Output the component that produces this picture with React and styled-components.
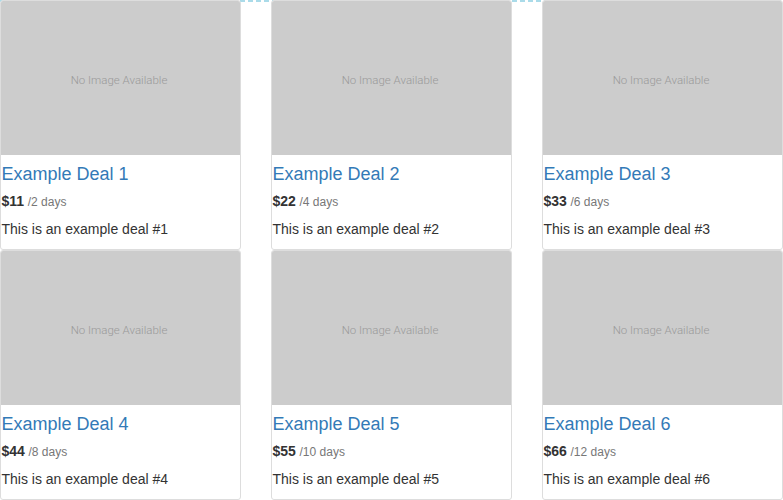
import React from "react";
import styled, { createGlobalStyle } from "styled-components";

const Global = createGlobalStyle`
  html, body { margin: 0; padding: 0; background: #fff; }
  body { font-family: "Liberation Sans", Arial, sans-serif; color: #333; }
`;

const Grid = styled.div`
  position: relative;
  display: grid;
  grid-template-columns: repeat(3, 241px);
  column-gap: 30px;
  width: 783px;
  &::before {
    content: "";
    position: absolute;
    left: 0;
    right: 0;
    top: 0;
    height: 2px;
    background: repeating-linear-gradient(90deg, #aadbe9 0 5px, transparent 5px 8px);
    z-index: 0;
  }
`;

const Card = styled.div`
  position: relative;
  z-index: 1;
  display: flex;
  flex-direction: column;
  height: 250px;
  box-sizing: border-box;
  border: 1px solid #ddd;
  border-radius: 3px;
  background: #fff;
  overflow: hidden;
`;

const Placeholder = styled.div`
  height: 154px;
  flex: none;
  background: #cccccc;
  display: flex;
  align-items: center;
  justify-content: center;
  padding: 4px 3px 0 0;
  box-sizing: border-box;
  font-family: Roboto, "Liberation Sans", sans-serif;
  font-size: 11.5px;
  color: #999;
  font-weight: 300;
`;

const Body = styled.div`
  padding: 9px 0 10px 0.5px;
`;

const Title = styled.a`
  display: block;
  font-size: 18px;
  line-height: 20px;
  color: #337ab7;
  text-decoration: none;
  margin-bottom: 8px;
`;

const Price = styled.div`
  font-size: 13px;
  line-height: 18px;
  margin-bottom: 8px;
  color: #333;
`;

const Amount = styled.strong`
  font-weight: bold;
  font-size: 14px;
`;

const Period = styled.span`
  font-size: 12px;
  color: #777;
`;

const Desc = styled.p`
  margin: 0;
  font-size: 14px;
  line-height: 20px;
  color: #333;
`;

const deals = [1, 2, 3, 4, 5, 6].map((n) => ({
  n,
  price: n * 11,
  days: n * 2,
}));

export default function App() {
  return (
    <>
      <Global />
      <Grid>
        {deals.map((d) => (
          <Card key={d.n}>
            <Placeholder>No Image Available</Placeholder>
            <Body>
              <Title href="#">Example Deal {d.n}</Title>
              <Price>
                <Amount>${d.price}</Amount> <Period>/{d.days} days</Period>
              </Price>
              <Desc>This is an example deal #{d.n}</Desc>
            </Body>
          </Card>
        ))}
      </Grid>
    </>
  );
}
